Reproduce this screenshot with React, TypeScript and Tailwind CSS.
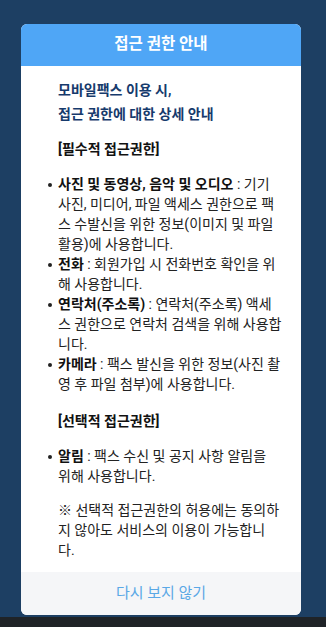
import React from "react";

const font = { fontFamily: 'Roboto, "Noto Sans CJK KR", sans-serif' };

interface BulletProps {
  label: string;
  lines: string[];
}

// lines are split the way the app wraps them
const Bullet: React.FC<BulletProps> = ({ label, lines }) => (
  <li className="flex">
    <span className="-ml-[10px] flex w-[10px] shrink-0 pt-[9px]">
      <span className="h-[4px] w-[4px] rounded-full bg-[#222]" />
    </span>
    <span className="whitespace-nowrap">
      <b className="font-bold text-[#111]">{label}</b> : {lines[0]}
      {lines.slice(1).map((l) => (
        <React.Fragment key={l}>
          <br />
          {l}
        </React.Fragment>
      ))}
    </span>
  </li>
);

export default function App() {
  return (
    <div
      className="flex h-[627px] w-[326px] flex-col overflow-hidden bg-[#1d3f63]"
      style={font}
    >
      <div className="flex-1 pt-[24px]">
        <div className="ml-[21px] flex h-[591px] w-[280px] flex-col overflow-hidden rounded-[6px] bg-white">
          {/* Header */}
          <div className="flex h-[42px] items-center justify-center bg-[#4fa6f6]">
            <h1 className="text-[15.5px] font-bold text-white">접근 권한 안내</h1>
          </div>

          {/* Body */}
          <div className="flex-1 pl-[37px] pr-[6px] pt-[12px] text-[14px] leading-[20px] text-[#222]">
            <p className="text-[14px] font-bold leading-[24px] text-[#163a6c]">
              모바일팩스 이용 시,
              <br />
              접근 권한에 대한 상세 안내
            </p>

            <p className="mt-[13px] font-bold text-[#111]">[필수적 접근권한]</p>

            <ul className="mt-[15px]">
              <Bullet
                label="사진 및 동영상, 음악 및 오디오"
                lines={[
                  "기기",
                  "사진, 미디어, 파일 액세스 권한으로 팩",
                  "스 수발신을 위한 정보(이미지 및 파일",
                  "활용)에 사용합니다.",
                ]}
              />
              <Bullet
                label="전화"
                lines={["회원가입 시 전화번호 확인을 위", "해 사용합니다."]}
              />
              <Bullet
                label="연락처(주소록)"
                lines={["연락처(주소록) 액세", "스 권한으로 연락처 검색을 위해 사용합", "니다."]}
              />
              <Bullet
                label="카메라"
                lines={["팩스 발신을 위한 정보(사진 촬", "영 후 파일 첨부)에 사용합니다."]}
              />
            </ul>

            <p className="mt-[17px] font-bold text-[#111]">[선택적 접근권한]</p>

            <ul className="mt-[15px]">
              <Bullet label="알림" lines={["팩스 수신 및 공지 사항 알림을", "위해 사용합니다."]} />
            </ul>

            <p className="mt-[14px] whitespace-nowrap">
              ※ 선택적 접근권한의 허용에는 동의하
              <br />
              지 않아도 서비스의 이용이 가능합니
              <br />
              다.
            </p>
          </div>

          {/* Footer */}
          <button className="flex h-[43px] items-center justify-center bg-[#f5f6f8] text-[15px] text-[#5aa8e6]">
            다시 보지 않기
          </button>
        </div>
      </div>
      <div className="h-[10px] bg-[#1f2327]" />
    </div>
  );
}
